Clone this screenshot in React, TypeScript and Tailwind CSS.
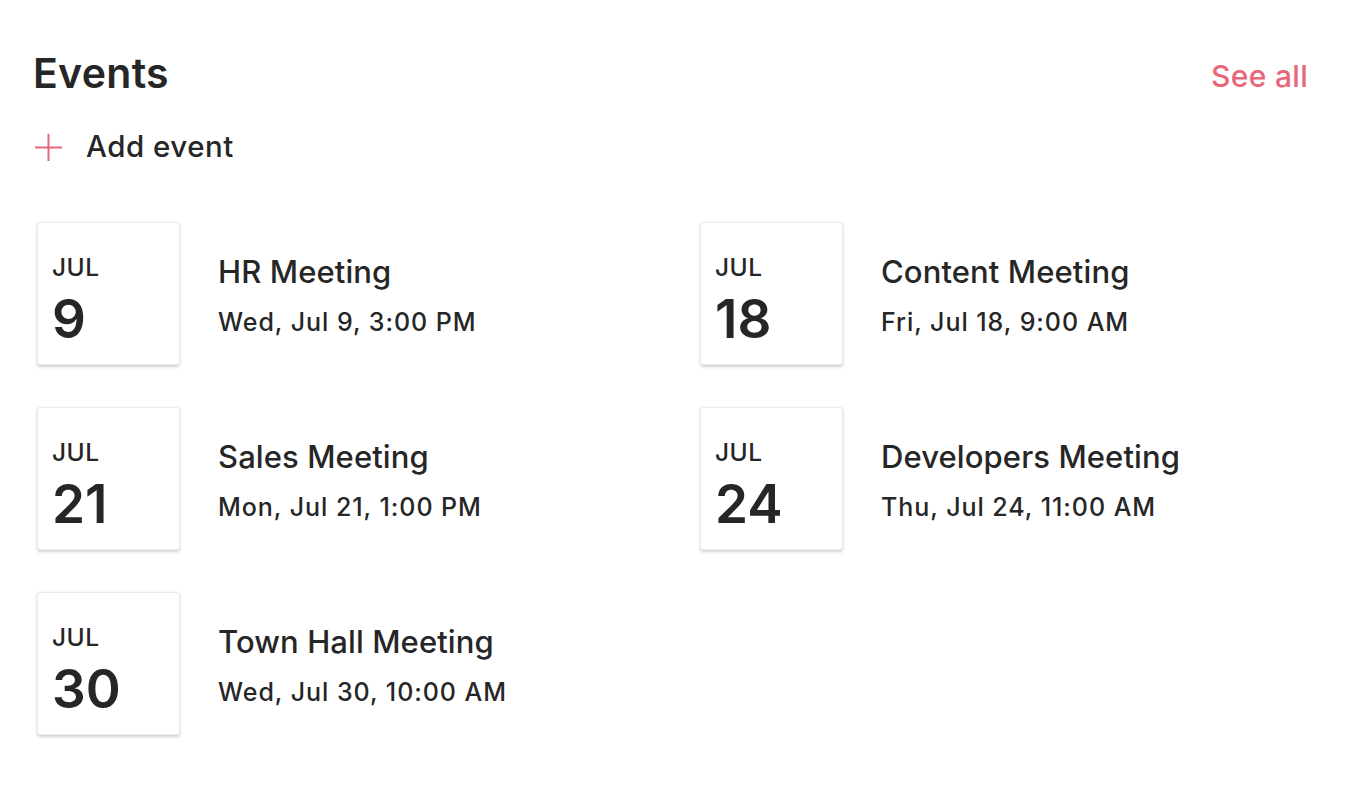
import React from "react";

const events = [
  { day: "9", title: "HR Meeting", when: "Wed, Jul 9, 3:00 PM" },
  { day: "18", title: "Content Meeting", when: "Fri, Jul 18, 9:00 AM" },
  { day: "21", title: "Sales Meeting", when: "Mon, Jul 21, 1:00 PM" },
  { day: "24", title: "Developers Meeting", when: "Thu, Jul 24, 11:00 AM" },
  { day: "30", title: "Town Hall Meeting", when: "Wed, Jul 30, 10:00 AM" },
];

export default function App() {
  return (
    <div
      className="w-[1360px] h-[786px] bg-white text-[#262626] overflow-hidden"
      style={{ fontFamily: "Inter, 'Noto Sans', sans-serif" }}
    >
      <div className="pl-[33px] pr-[52px] pt-[46px]">
        <div className="flex items-center justify-between h-[54px]">
          <h1 className="text-[41px] font-semibold leading-none tracking-[0.3px]">Events</h1>
          <a className="text-[30px] font-medium text-[#e8677a] leading-none mt-[6px] tracking-[0.3px]">See all</a>
        </div>
        <div className="flex items-center mt-[27px] h-[40px]">
          <svg width="29" height="29" viewBox="0 0 29 29" className="ml-[1px]">
            <path d="M14.5 1v27M1 14.5h27" stroke="#e8677a" strokeWidth="2" />
          </svg>
          <span className="ml-[23px] text-[29.5px] font-medium leading-none tracking-[0.5px]">Add event</span>
        </div>
        <div className="grid grid-cols-[663px_1fr] gap-y-[42px] mt-[55px] pl-[4px]">
          {events.map((e) => (
            <div key={e.day} className="flex items-center">
              <div className="w-[143px] h-[143px] shrink-0 bg-white rounded-[3px] border border-[#ececec] shadow-[0_1.5px_3px_rgba(0,0,0,0.18)] pl-[14px] pt-[32px]">
                <div className="text-[24.5px] font-medium leading-none tracking-[0.5px]">JUL</div>
                <div className="text-[53px] font-semibold leading-none mt-[13px]">{e.day}</div>
              </div>
              <div className="ml-[38px] mt-[4px]">
                <div className="text-[31px] font-medium leading-none tracking-[0.1px]">{e.title}</div>
                <div className="text-[25px] font-medium leading-none mt-[23px] tracking-[0.95px]">{e.when}</div>
              </div>
            </div>
          ))}
        </div>
      </div>
    </div>
  );
}
